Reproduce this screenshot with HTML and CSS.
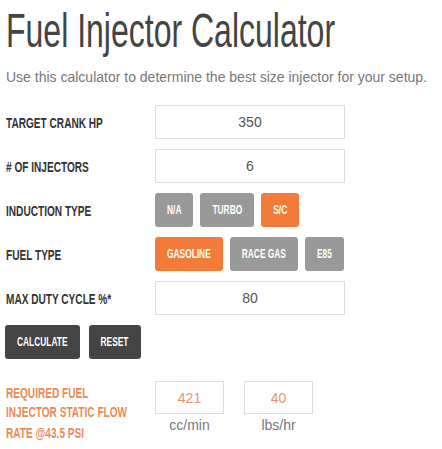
FILE: index.html
```html
<!DOCTYPE html>
<html lang="en">
  <head>
    <meta charset="UTF-8" />
    <title>Fuel Injector Calculator</title>
    <link rel="stylesheet" href="styles.css">
  </head>
  <body>
    <div class="calc">
      <h1>Fuel Injector Calculator</h1>
      <p class="intro">Use this calculator to determine the best size injector for your setup.</p>

      <div class="row">
        <label class="label">TARGET CRANK HP</label>
        <input class="field" type="text" value="350" />
      </div>

      <div class="row">
        <label class="label"># OF INJECTORS</label>
        <input class="field" type="text" value="6" />
      </div>

      <div class="row">
        <label class="label">INDUCTION TYPE</label>
        <div class="options">
          <button class="opt"><span>N/A</span></button>
          <button class="opt"><span>TURBO</span></button>
          <button class="opt active"><span>S/C</span></button>
        </div>
      </div>

      <div class="row">
        <label class="label">FUEL TYPE</label>
        <div class="options">
          <button class="opt active"><span>GASOLINE</span></button>
          <button class="opt"><span>RACE GAS</span></button>
          <button class="opt"><span>E85</span></button>
        </div>
      </div>

      <div class="row">
        <label class="label">MAX DUTY CYCLE %*</label>
        <input class="field" type="text" value="80" />
      </div>

      <div class="actions">
        <button class="action"><span>CALCULATE</span></button>
        <button class="action"><span>RESET</span></button>
      </div>

      <div class="result">
        <div class="result-label">REQUIRED FUEL<br />INJECTOR STATIC FLOW<br />RATE @43.5 PSI</div>
        <div class="outputs">
          <div class="output">
            <input class="out-field" type="text" value="421" readonly />
            <span class="unit">cc/min</span>
          </div>
          <div class="output">
            <input class="out-field" type="text" value="40" readonly />
            <span class="unit">lbs/hr</span>
          </div>
        </div>
      </div>
    </div>
  </body>
</html>
```

FILE: styles.css
```css
/* no condensed face installed: small text stretched vertically */
body {
  margin: 0;
  min-height: 100vh;
  background: #fff;
  font-family: "Liberation Sans", Arial, sans-serif;
}
.calc {
  padding: 0 6px 30px;
}
h1 {
  font-weight: normal;
  font-size: 32px;
  line-height: 36px;
  color: #444;
  margin: 4px 0 0;
  transform: scaleY(1.48);
  transform-origin: left top;
}
.intro {
  font-size: 14px;
  color: #777;
  margin: 27px 0 18px;
  line-height: 20px;
}
.row {
  display: flex;
  align-items: center;
  margin-bottom: 10px;
}
.label {
  font-size: 10.1px;
  font-weight: bold;
  color: #333;
  width: 149px;
  flex-shrink: 0;
  transform: scaleY(1.5);
}
.field {
  width: 190px;
  height: 34px;
  box-sizing: border-box;
  border: 1px solid #ddd;
  text-align: center;
  font-family: "Liberation Sans", Arial, sans-serif;
  font-size: 14px;
  color: #555;
  padding: 0;
}
.options {
  display: flex;
  gap: 7px;
}
.opt,
.action {
  height: 34px;
  border: none;
  border-radius: 3px;
  background: #999;
  color: #fff;
  font-family: "Liberation Sans", Arial, sans-serif;
  font-weight: bold;
  font-size: 8.4px;
  padding: 0 12px;
  cursor: pointer;
}
.opt span,
.action span {
  display: inline-block;
  transform: scaleY(1.42);
}
.opt.active {
  background: #f27b3a;
}
.actions {
  display: flex;
  gap: 9px;
  margin: 0 0 22px -1px;
}
.action {
  background: #444;
}
.result {
  display: flex;
  align-items: flex-start;
}
.result-label {
  font-size: 10.1px;
  font-weight: bold;
  line-height: 13.33px;
  color: #ec8a56;
  width: 149px;
  flex-shrink: 0;
  padding-top: 1px;
  transform: scaleY(1.5);
  transform-origin: left top;
}
.outputs {
  display: flex;
  gap: 20px;
}
.output {
  display: flex;
  flex-direction: column;
  align-items: center;
}
.out-field {
  width: 69px;
  height: 33px;
  box-sizing: border-box;
  border: 1px solid #ddd;
  text-align: center;
  font-family: "Liberation Sans", Arial, sans-serif;
  font-size: 14px;
  color: #e8956a;
  padding: 0;
}
.unit {
  font-size: 14px;
  color: #777;
  line-height: 22px;
}
```
